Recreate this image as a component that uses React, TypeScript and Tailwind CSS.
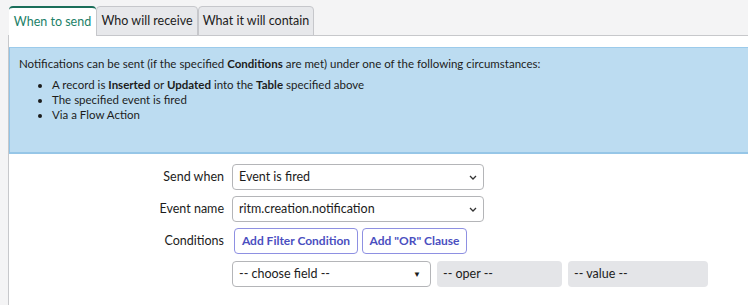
import React from 'react'

const tabs = [
  { label: 'When to send', w: 'w-[87px]' },
  { label: 'Who will receive', w: 'w-[102px]' },
  { label: 'What it will contain', w: 'w-[116px]' },
]

function Chevron() {
  return (
    <svg width="8" height="5" viewBox="0 0 8 5" className="shrink-0">
      <path d="M1 1l3 3 3-3" fill="none" stroke="#333" strokeWidth="1.3" />
    </svg>
  )
}

function Select({ value, width }: { value: string; width: string }) {
  return (
    <div className={`flex items-center justify-between h-[26px] ${width} rounded-[4px] border border-[#b4b5b8] bg-white pl-[6px] pr-[6px] text-[12.5px] text-[#1c1c1c]`}>
      <span>{value}</span>
      <Chevron />
    </div>
  )
}

export default function App() {
  return (
    <div className="w-[748px] h-[305px] overflow-hidden bg-[#f4f4f5] pl-[8px] pt-[6px] text-[#222]" style={{ fontFamily: 'Lato, "Open Sans", sans-serif' }}>
      {/* Tabs */}
      <div className="flex pl-[1px] h-[30px] relative z-10">
        {tabs.map((t, i) =>
          i === 0 ? (
            <div key={t.label} className={`h-[30px] ${t.w} rounded-t-[4px] border-t-2 border-[#1b6e5a] bg-white flex items-center justify-center text-[12.5px] text-[#1c7f68]`}>
              {t.label}
            </div>
          ) : (
            <div key={t.label} className={`h-[30px] ${t.w} -mb-px rounded-t-[4px] border border-[#c6c7cb] bg-[#e7e8eb] flex items-center justify-center text-[12.5px] text-[#1c1c1c]`}>
              {t.label}
            </div>
          )
        )}
      </div>

      {/* Panel */}
      <div className="h-full bg-white border-l border-t border-[#c7c8cb] -mt-px">
        <div className="pt-[11px]">
          <div className="h-[107px] bg-[#bcdcf1] border-t border-[#9ccbeb] border-l border-l-[#92c4e6] border-b-2 border-b-[#96c6e7] pl-[9px] pt-[7px] text-[11.5px] text-[#1c1c1c]">
            <p className="leading-[18px]">
              Notifications can be sent (if the specified <b>Conditions</b> are met) under one of the following circumstances:
            </p>
            <ul className="mt-[4px] pl-[33px] list-disc leading-[15px]">
              <li>A record is <b>Inserted</b> or <b>Updated</b> into the <b>Table</b> specified above</li>
              <li>The specified event is fired</li>
              <li>Via a Flow Action</li>
            </ul>
          </div>
        </div>

        {/* Form */}
        <div className="mt-[10px] flex flex-col gap-[6px] text-[12.5px]">
          <div className="flex items-center">
            <div className="w-[223px] text-right pr-[8px] text-[#1c1c1c]">Send when</div>
            <Select value="Event is fired" width="w-[252px]" />
          </div>
          <div className="flex items-center">
            <div className="w-[223px] text-right pr-[8px] text-[#1c1c1c]">Event name</div>
            <Select value="ritm.creation.notification" width="w-[252px]" />
          </div>
          <div className="flex items-center">
            <div className="w-[223px] text-right pr-[8px] text-[#1c1c1c]">Conditions</div>
            <div className="flex gap-[4px] pl-[2px]">
              <button className="h-[26px] w-[124px] rounded-[4px] border border-[#8e90e2] bg-white text-[12px] font-bold text-[#4b4fbf]">
                Add Filter Condition
              </button>
              <button className="h-[26px] w-[105px] rounded-[4px] border border-[#8e90e2] bg-white text-[12px] font-bold text-[#4b4fbf]">
                Add "OR" Clause
              </button>
            </div>
          </div>
          <div className="flex items-center pt-px">
            <div className="w-[223px]" />
            <div className="flex gap-[6px]">
              <div className="flex items-center justify-between h-[26px] w-[199px] rounded-[4px] border border-[#b4b5b8] bg-white pl-[6px] pr-[9px] text-[12.5px] text-[#1c1c1c]">
                <span>-- choose field --</span>
                <span className="text-[8px]">▼</span>
              </div>
              <div className="flex items-center h-[26px] w-[125px] rounded-[4px] bg-[#e4e5e8] pl-[6px] text-[12.5px] text-[#1c1c1c]">-- oper --</div>
              <div className="flex items-center h-[26px] w-[140px] rounded-[4px] bg-[#e4e5e8] pl-[6px] text-[12.5px] text-[#1c1c1c]">-- value --</div>
            </div>
          </div>
        </div>
      </div>
    </div>
  )
}
